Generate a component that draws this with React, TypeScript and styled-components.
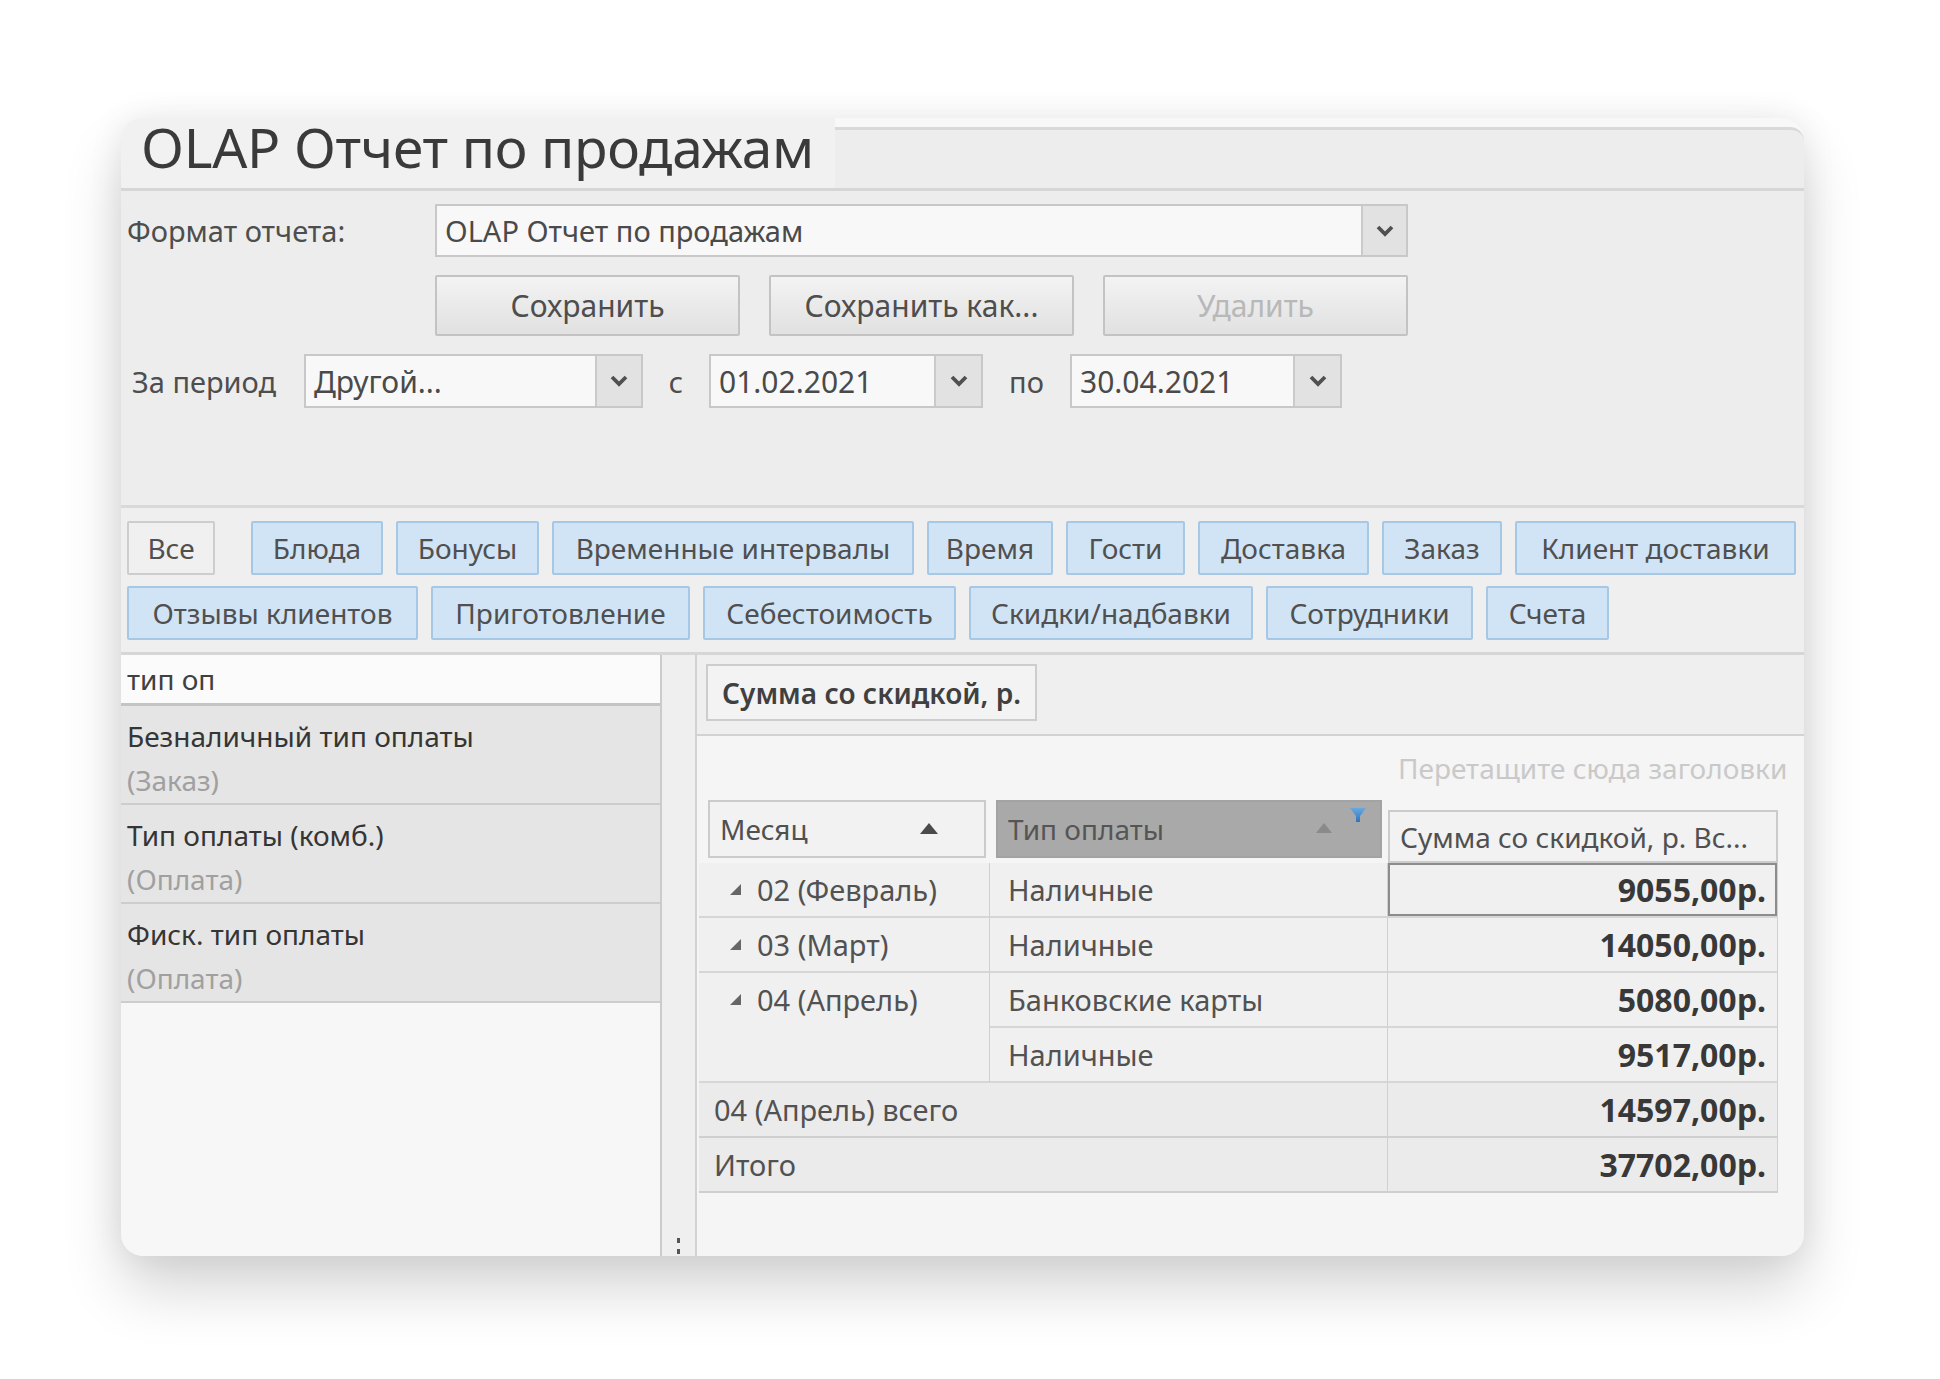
import React from "react";
import styled, { createGlobalStyle } from "styled-components";

const GlobalStyle = createGlobalStyle`
  html, body {
    margin: 0;
    padding: 0;
    background: #ffffff;
  }
  body {
    font-family: "Noto Sans", "Open Sans", sans-serif;
    color: #4a4a4a;
  }
  * { box-sizing: border-box; }
`;

const Page = styled.div`
  width: 1940px;
  height: 1379px;
  padding: 118px 0 0 121px;
  background: #ffffff;
`;

const Window = styled.div`
  width: 1683px;
  height: 1138px;
  border-radius: 22px;
  background: #ededed;
  box-shadow: 0 34px 60px rgba(0, 0, 0, 0.16), 0 0 34px rgba(0, 0, 0, 0.08);
  display: flex;
  flex-direction: column;
`;

const Header = styled.div`
  height: 73px;
  display: flex;
  background: #f8f8f8;
  border-radius: 22px 22px 0 0;
  border-bottom: 3px solid #d6d6d6;
`;

const TitleTab = styled.div`
  width: 714px;
  background: #f1f1f1;
  border-top-left-radius: 22px;
  padding-left: 20px;
  font-size: 55px;
  line-height: 58px;
  color: #3a3a3a;
  white-space: nowrap;
  letter-spacing: -0.3px;
`;

const TitleFiller = styled.div`
  flex: 1;
  margin-top: 9px;
  border-top: 3px solid #d9d9d9;
  border-top-right-radius: 14px;
  background: #ededed;
`;

const FormSection = styled.div`
  height: 317px;
  padding: 13px 0 0 6px;
  display: flex;
  flex-direction: column;
  gap: 18px;
  border-bottom: 3px solid #d9d9d9;
`;

const FormRow = styled.div<{ h: number }>`
  display: flex;
  align-items: center;
  height: ${(p) => p.h}px;
`;

const Label = styled.div<{ w: number; pl?: number; center?: boolean }>`
  width: ${(p) => p.w}px;
  padding-left: ${(p) => p.pl ?? 0}px;
  text-align: ${(p) => (p.center ? "center" : "left")};
  font-size: 29px;
  color: #4e4e4e;
  white-space: nowrap;
`;

const Combo = styled.div<{ w: number; h: number }>`
  width: ${(p) => p.w}px;
  height: ${(p) => p.h}px;
  display: flex;
  background: #f8f8f8;
  border: 2px solid #c8c8c8;
`;

const ComboText = styled.div<{ fs: number }>`
  flex: 1;
  display: flex;
  align-items: center;
  padding-left: 8px;
  font-size: ${(p) => p.fs}px;
  color: #4a4a4a;
  white-space: nowrap;
  overflow: hidden;
`;

const ComboButton = styled.div<{ w: number }>`
  width: ${(p) => p.w}px;
  display: flex;
  align-items: center;
  justify-content: center;
  background: #e2e2e2;
  border-left: 2px solid #cacaca;
`;

const ButtonsRow = styled.div`
  display: flex;
  gap: 29px;
  padding-left: 308px;
  height: 61px;
`;

const Button = styled.div<{ disabled?: boolean }>`
  width: 305px;
  height: 61px;
  display: flex;
  align-items: center;
  justify-content: center;
  background: linear-gradient(#f3f3f3, #e1e1e1);
  border: 2px solid #c3c3c3;
  border-radius: 2px;
  font-size: 30px;
  color: ${(p) => (p.disabled ? "#b8b8b8" : "#4e4e4e")};
`;

const TabsSection = styled.div`
  height: 147px;
  padding: 13px 0 0 6px;
  display: flex;
  flex-direction: column;
  gap: 11px;
  background: #efefef;
  border-bottom: 3px solid #d6d6d6;
`;

const TabRow = styled.div`
  display: flex;
  gap: 13px;
  height: 54px;
`;

const Tab = styled.div<{ w: number; plain?: boolean; mr?: number }>`
  width: ${(p) => p.w}px;
  margin-right: ${(p) => p.mr ?? 0}px;
  display: flex;
  align-items: center;
  justify-content: center;
  font-size: 28px;
  color: #505050;
  white-space: nowrap;
  background: ${(p) => (p.plain ? "#f0f0f0" : "#d0e4f5")};
  border: 2px solid ${(p) => (p.plain ? "#cdcdcd" : "#a6c8e4")};
  border-radius: 2px;
`;

const Lower = styled.div`
  flex: 1;
  display: flex;
  min-height: 0;
`;

const LeftPanel = styled.div`
  width: 541px;
  display: flex;
  flex-direction: column;
  background: #f7f7f7;
  border-right: 2px solid #cbcbcb;
  border-bottom-left-radius: 22px;
`;

const SearchBox = styled.div`
  height: 51px;
  display: flex;
  align-items: center;
  padding-left: 6px;
  background: #fbfbfb;
  border-bottom: 3px solid #c4c4c4;
  font-size: 28px;
  color: #404040;
`;

const FieldItem = styled.div`
  height: 99px;
  padding: 8px 0 0 6px;
  background: #e5e5e5;
  border-bottom: 2px solid #cdcdcd;
`;

const FieldTitle = styled.div`
  font-size: 28px;
  line-height: 44px;
  color: #353535;
  white-space: nowrap;
`;

const FieldSub = styled.div`
  font-size: 28px;
  line-height: 44px;
  color: #a0a0a0;
`;

const Splitter = styled.div`
  width: 35px;
  display: flex;
  flex-direction: column;
  align-items: center;
  justify-content: flex-end;
  gap: 6px;
  padding-bottom: 2px;
  background: #efefef;
  border-right: 2px solid #d2d2d2;
`;

const Dot = styled.div`
  width: 3px;
  height: 5px;
  background: #555;
`;

const RightPanel = styled.div`
  flex: 1;
  display: flex;
  flex-direction: column;
  min-width: 0;
`;

const DataFieldArea = styled.div`
  height: 81px;
  padding: 9px 0 0 9px;
  background: #efefef;
  border-bottom: 2px solid #d2d2d2;
`;

const DataFieldButton = styled.div`
  width: 331px;
  height: 57px;
  display: flex;
  align-items: center;
  justify-content: center;
  background: #f3f3f3;
  border: 2px solid #cdcdcd;
  font-size: 28px;
  font-weight: 600;
  color: #404040;
  white-space: nowrap;
`;

const GridArea = styled.div`
  flex: 1;
  background: #f5f5f5;
  overflow: hidden;
  border-bottom-right-radius: 22px;
  display: flex;
  flex-direction: column;
`;

const DropHint = styled.div`
  height: 64px;
  padding-left: 701px;
  display: flex;
  align-items: center;
  font-size: 28px;
  color: #c9c9c9;
  white-space: nowrap;
`;

const HeaderRow = styled.div`
  display: flex;
  align-items: flex-start;
  padding-left: 11px;
  height: 63px;
`;

const ColHeader = styled.div<{ w: number; dark?: boolean; mt?: number; h: number; ml?: number }>`
  position: relative;
  width: ${(p) => p.w}px;
  height: ${(p) => p.h}px;
  margin-top: ${(p) => p.mt ?? 0}px;
  margin-left: ${(p) => p.ml ?? 0}px;
  display: flex;
  align-items: center;
  padding-left: 10px;
  font-size: 28px;
  white-space: nowrap;
  color: ${(p) => (p.dark ? "#555555" : "#505050")};
  background: ${(p) => (p.dark ? "#a9a9a9" : "#f2f2f2")};
  border: 2px solid ${(p) => (p.dark ? "#a3a3a3" : "#cbcbcb")};
`;

const SortArrow = styled.svg<{ left: number }>`
  position: absolute;
  left: ${(p) => p.left}px;
  top: 21px;
`;

const FilterIcon = styled.svg`
  position: absolute;
  right: 14px;
  top: 0px;
`;

const Table = styled.div`
  display: grid;
  grid-template-columns: 291px 398px 390px;
  grid-auto-rows: 55px;
  margin-left: 2px;
`;

const Cell = styled.div<{
  span?: number;
  rows?: number;
  align?: "right" | "left";
  total?: boolean;
  pl?: number;
  selected?: boolean;
  bold?: boolean;
}>`
  grid-column: span ${(p) => p.span ?? 1};
  grid-row: span ${(p) => p.rows ?? 1};
  display: flex;
  align-items: flex-start;
  justify-content: ${(p) => (p.align === "right" ? "flex-end" : "flex-start")};
  padding-left: ${(p) => p.pl ?? 0}px;
  padding-right: ${(p) => (p.align === "right" ? 11 : 0)}px;
  background: ${(p) => (p.total ? "#ebebeb" : "#f0f0f0")};
  border-bottom: 2px solid ${(p) => (p.total ? "#cfcfcf" : "#d6d6d6")};
  border-right: 1px solid #d0d0d0;
  box-shadow: ${(p) => (p.selected ? "inset 0 0 0 2px #8c8c8c" : "none")};
  font-size: ${(p) => (p.bold ? 32 : 29)}px;
  font-weight: ${(p) => (p.bold ? 700 : 400)};
  color: ${(p) => (p.bold ? "#383838" : "#525252")};
  white-space: nowrap;
`;

const CellLine = styled.div`
  height: 53px;
  display: flex;
  align-items: center;
  gap: 16px;
`;

const Chevron = () => (
  <svg width="18" height="12" viewBox="0 0 18 12">
    <polyline points="2,2 9,9 16,2" fill="none" stroke="#505050" strokeWidth="3.8" />
  </svg>
);

const Expand = () => (
  <svg width="11" height="11" viewBox="0 0 11 11">
    <polygon points="11,0 11,11 0,11" fill="#666" />
  </svg>
);

const tabsRow1: [string, number][] = [
  ["Блюда", 132],
  ["Бонусы", 143],
  ["Временные интервалы", 362],
  ["Время", 126],
  ["Гости", 119],
  ["Доставка", 171],
  ["Заказ", 120],
  ["Клиент доставки", 281],
];

const tabsRow2: [string, number][] = [
  ["Отзывы клиентов", 291],
  ["Приготовление", 259],
  ["Себестоимость", 253],
  ["Скидки/надбавки", 284],
  ["Сотрудники", 207],
  ["Счета", 123],
];

const fields: [string, string][] = [
  ["Безналичный тип оплаты", "(Заказ)"],
  ["Тип оплаты (комб.)", "(Оплата)"],
  ["Фиск. тип оплаты", "(Оплата)"],
];

type Row = {
  month?: string;
  monthRows?: number;
  type?: string;
  total?: string;
  sum: string;
  selected?: boolean;
};

const rows: Row[] = [
  { month: "02 (Февраль)", type: "Наличные", sum: "9055,00р.", selected: true },
  { month: "03 (Март)", type: "Наличные", sum: "14050,00р." },
  { month: "04 (Апрель)", monthRows: 2, type: "Банковские карты", sum: "5080,00р." },
  { type: "Наличные", sum: "9517,00р." },
  { total: "04 (Апрель) всего", sum: "14597,00р." },
  { total: "Итого", sum: "37702,00р." },
];

export default function App() {
  return (
    <>
      <GlobalStyle />
      <Page>
        <Window>
          <Header>
            <TitleTab>OLAP Отчет по продажам</TitleTab>
            <TitleFiller />
          </Header>

          <FormSection>
            <FormRow h={53}>
              <Label w={308}>Формат отчета:</Label>
              <Combo w={973} h={53}>
                <ComboText fs={29}>OLAP Отчет по продажам</ComboText>
                <ComboButton w={45}>
                  <Chevron />
                </ComboButton>
              </Combo>
            </FormRow>
            <ButtonsRow>
              <Button>Сохранить</Button>
              <Button>Сохранить как...</Button>
              <Button disabled>Удалить</Button>
            </ButtonsRow>
            <FormRow h={54}>
              <Label w={177} pl={5}>За период</Label>
              <Combo w={339} h={54}>
                <ComboText fs={30}>Другой...</ComboText>
                <ComboButton w={46}>
                  <Chevron />
                </ComboButton>
              </Combo>
              <Label w={66} center>с</Label>
              <Combo w={274} h={54}>
                <ComboText fs={30}>01.02.2021</ComboText>
                <ComboButton w={47}>
                  <Chevron />
                </ComboButton>
              </Combo>
              <Label w={87} center>по</Label>
              <Combo w={272} h={54}>
                <ComboText fs={30}>30.04.2021</ComboText>
                <ComboButton w={47}>
                  <Chevron />
                </ComboButton>
              </Combo>
            </FormRow>
          </FormSection>

          <TabsSection>
            <TabRow>
              <Tab w={88} plain mr={23}>Все</Tab>
              {tabsRow1.map(([t, w]) => (
                <Tab key={t} w={w}>{t}</Tab>
              ))}
            </TabRow>
            <TabRow>
              {tabsRow2.map(([t, w]) => (
                <Tab key={t} w={w}>{t}</Tab>
              ))}
            </TabRow>
          </TabsSection>

          <Lower>
            <LeftPanel>
              <SearchBox>тип оп</SearchBox>
              {fields.map(([t, s]) => (
                <FieldItem key={t}>
                  <FieldTitle>{t}</FieldTitle>
                  <FieldSub>{s}</FieldSub>
                </FieldItem>
              ))}
            </LeftPanel>
            <Splitter>
              <Dot />
              <Dot />
            </Splitter>
            <RightPanel>
              <DataFieldArea>
                <DataFieldButton>Сумма со скидкой, р.</DataFieldButton>
              </DataFieldArea>
              <GridArea>
                <DropHint>Перетащите сюда заголовки</DropHint>
                <HeaderRow>
                  <ColHeader w={278} h={58}>
                    Месяц
                    <SortArrow left={210} width="18" height="11" viewBox="0 0 18 11">
                      <polygon points="9,0 18,11 0,11" fill="#4a4a4a" />
                    </SortArrow>
                  </ColHeader>
                  <ColHeader w={386} h={58} dark ml={10}>
                    Тип оплаты
                    <SortArrow left={318} width="16" height="10" viewBox="0 0 16 10">
                      <polygon points="8,0 16,10 0,10" fill="#8a8a8a" />
                    </SortArrow>
                    <FilterIcon width="16" height="22" viewBox="0 0 16 22">
                      <defs>
                        <linearGradient id="fg" x1="0" y1="0" x2="0" y2="1">
                          <stop offset="0" stopColor="#6aa8e0" />
                          <stop offset="1" stopColor="#2f74bb" />
                        </linearGradient>
                      </defs>
                      <polygon points="0,6 16,6 10,14 10,20 6,20 6,14" fill="url(#fg)" />
                    </FilterIcon>
                  </ColHeader>
                  <ColHeader w={390} h={53} mt={10} ml={6}>
                    Сумма со скидкой, р. Вс...
                  </ColHeader>
                </HeaderRow>
                <Table>
                  {rows.map((r, i) => (
                    <React.Fragment key={i}>
                      {r.month && (
                        <Cell pl={31} rows={r.monthRows}>
                          <CellLine>
                            <Expand />
                            {r.month}
                          </CellLine>
                        </Cell>
                      )}
                      {r.type && (
                        <Cell pl={18}>
                          <CellLine>{r.type}</CellLine>
                        </Cell>
                      )}
                      {r.total && (
                        <Cell span={2} pl={15} total>
                          <CellLine>{r.total}</CellLine>
                        </Cell>
                      )}
                      <Cell align="right" bold total={!!r.total} selected={r.selected}>
                        <CellLine>{r.sum}</CellLine>
                      </Cell>
                    </React.Fragment>
                  ))}
                </Table>
              </GridArea>
            </RightPanel>
          </Lower>
        </Window>
      </Page>
    </>
  );
}
